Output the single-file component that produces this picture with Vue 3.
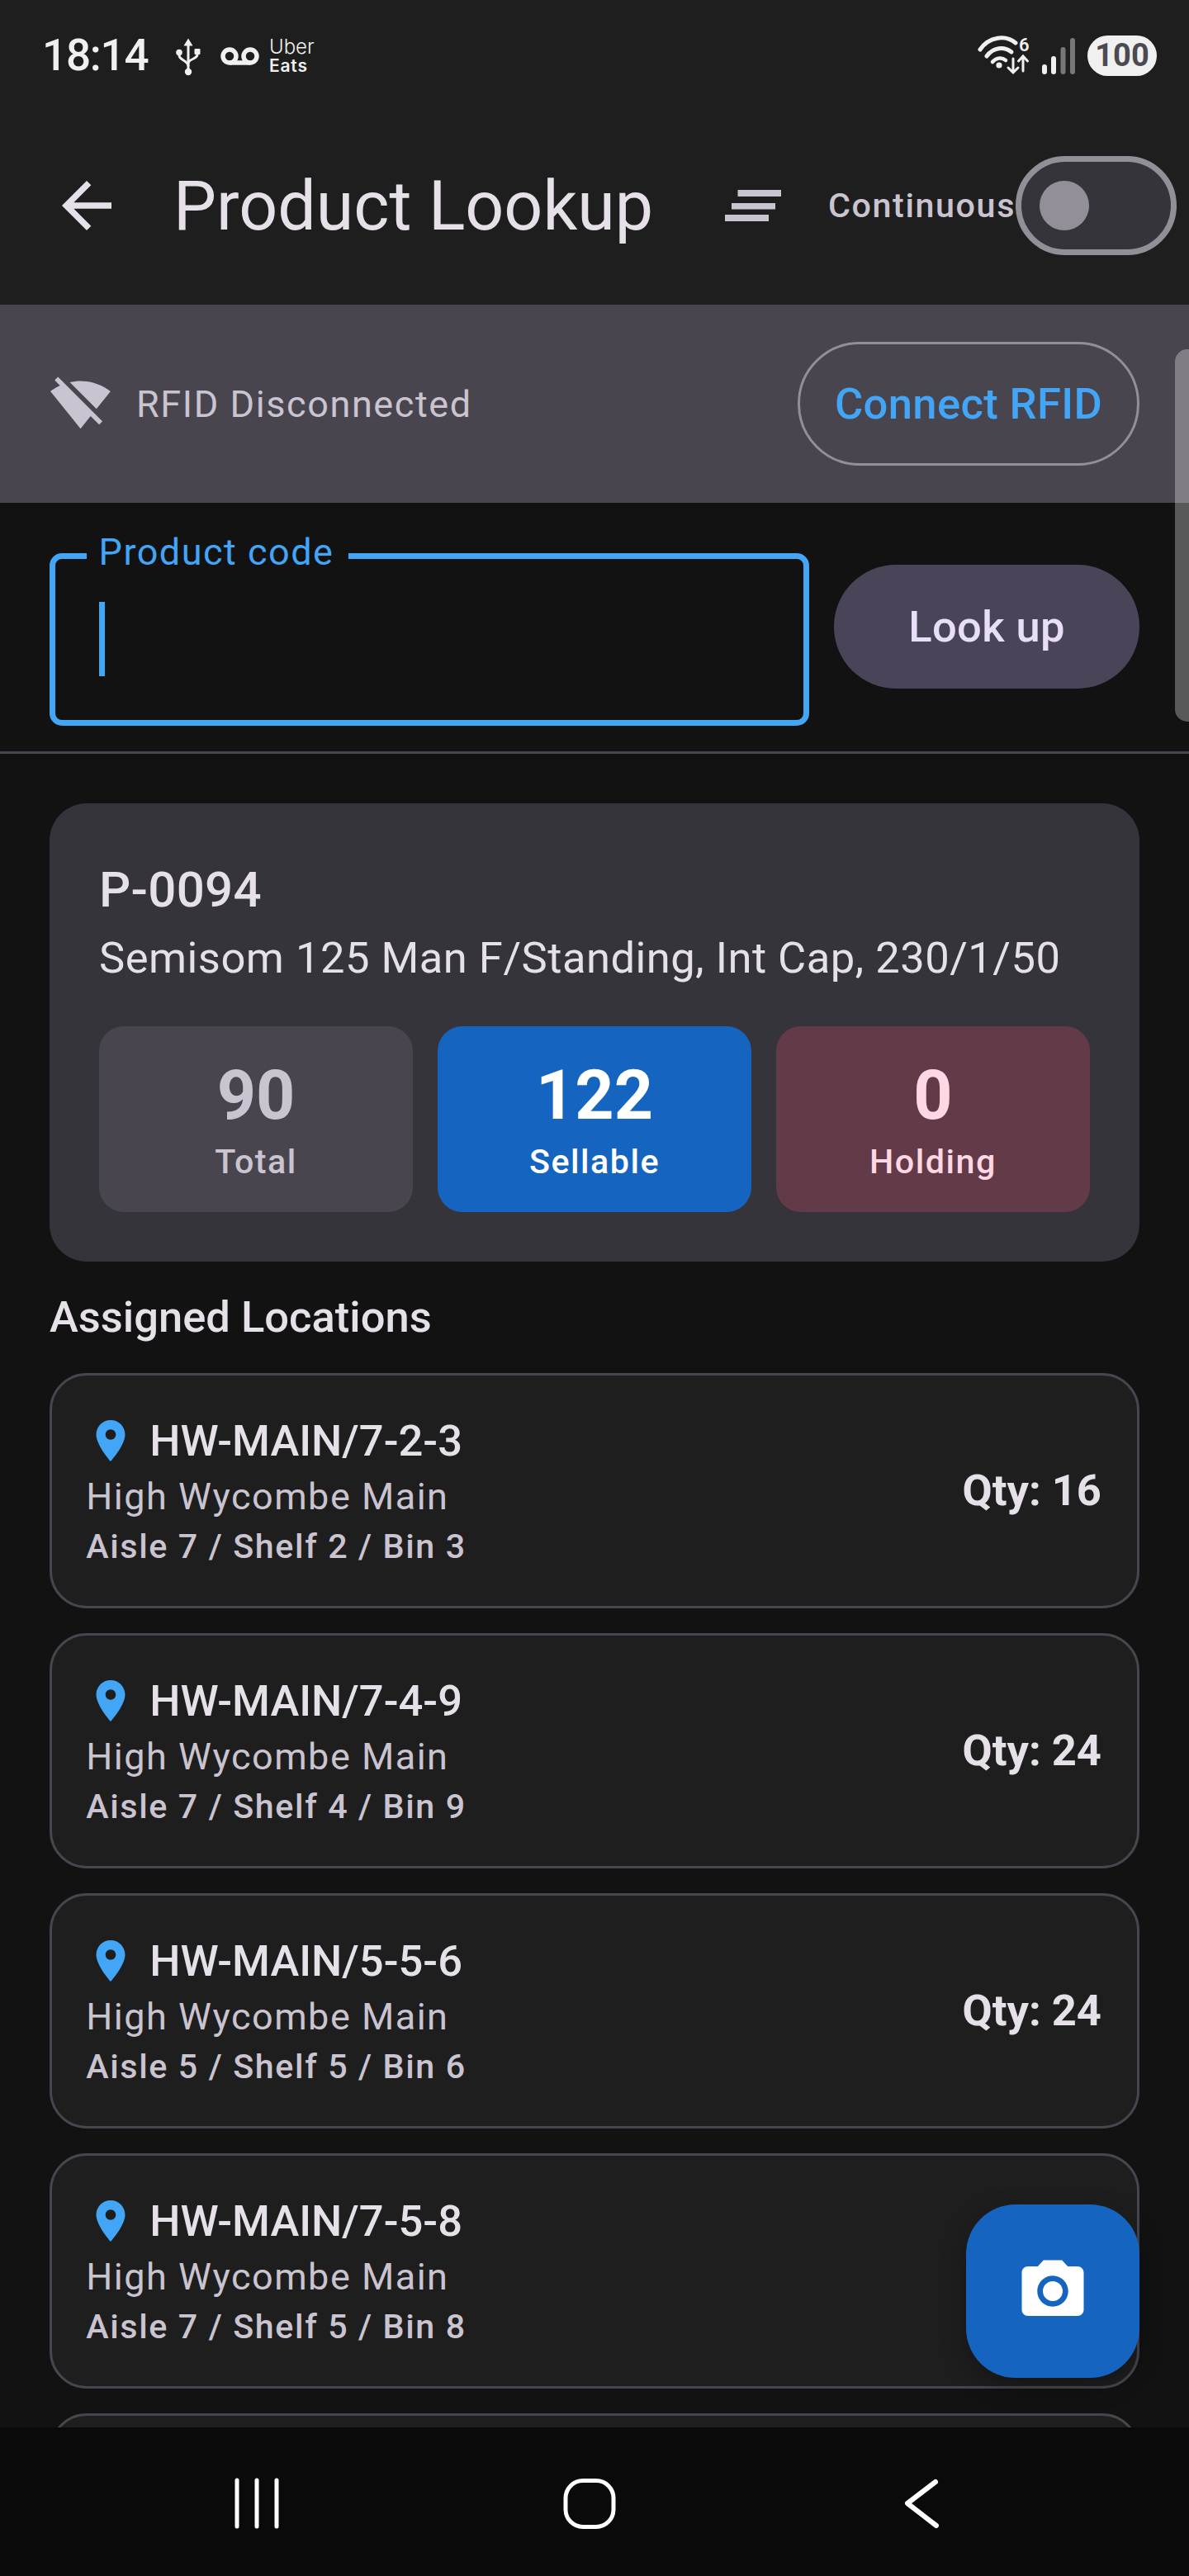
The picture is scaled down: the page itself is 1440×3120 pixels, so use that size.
<template>
  <div class="screen">
    <header class="app-header">
      <div class="status-bar">
        <span class="clock">18:14</span>
        <svg class="usb" width="34" height="46" viewBox="0 0 34 46" fill="none" stroke="#f0f0f0" stroke-width="3">
          <path d="M17 6V40" />
          <path d="M17 0.5L11.5 9.5H22.5Z" fill="#f0f0f0" stroke="none" />
          <circle cx="17" cy="41" r="4.2" fill="#f0f0f0" stroke="none" />
          <circle cx="6" cy="17.5" r="3.8" fill="#f0f0f0" stroke="none" />
          <rect x="24.5" y="13" width="7" height="7" rx="1" fill="#f0f0f0" stroke="none" />
          <path d="M6 18V21C6 27 17 27 17 34" />
          <path d="M28 18V20C28 26 17 25 17 31" />
        </svg>
        <svg class="voicemail" width="47" height="22" viewBox="0 0 47 22" fill="none" stroke="#f0f0f0" stroke-width="5.5">
          <circle cx="11" cy="11" r="8" />
          <circle cx="36" cy="11" r="8" />
          <path d="M11 19H36" />
        </svg>
        <div class="uber">
          <span class="uber-top">Uber</span>
          <span class="uber-bottom">Eats</span>
        </div>
        <div class="status-right">
          <svg width="66" height="48" viewBox="0 0 66 48" fill="none" stroke="#f0f0f0" stroke-linecap="round">
            <path d="M3 17C14 1 34 -1 46 9" stroke-width="5" />
            <path d="M11 25C19 14 32 13 41 20" stroke-width="5" />
            <path d="M18 32C22 27 29 26 34 30" stroke-width="4.5" />
            <circle cx="26" cy="36" r="3.6" fill="#f0f0f0" stroke="none" />
            <path d="M43 28V44M37 39L43 45L49 39" stroke-width="3" />
            <path d="M55 43V26M49.5 31L55 25L60.5 31" stroke-width="3" />
            <text x="50" y="19" class="wifi-six">6</text>
          </svg>
          <svg class="signal" width="40" height="44" viewBox="0 0 40 44">
            <rect x="0" y="32" width="6" height="12" rx="3" fill="#f0f0f0" />
            <rect x="11" y="22" width="6" height="22" rx="3" fill="#f0f0f0" />
            <rect x="22.5" y="11" width="6" height="33" rx="3" fill="#777" />
            <rect x="34" y="0" width="6" height="44" rx="3" fill="#777" />
          </svg>
          <span class="battery">100</span>
        </div>
      </div>

      <div class="toolbar">
        <svg class="back-arrow" width="90" height="90" viewBox="0 0 24 24" fill="#e6e0e9">
          <path d="M20 11H7.83l5.59-5.59L12 4l-8 8 8 8 1.41-1.41L7.83 13H20v-2z" />
        </svg>
        <h1 class="title">Product Lookup</h1>
        <svg class="sort-icon" width="90" height="90" viewBox="0 0 90 90" fill="#cac4d0">
          <rect x="26.5" y="26" width="52.5" height="8" />
          <rect x="19" y="42" width="53" height="7.5" />
          <rect x="11" y="56" width="53" height="8" />
        </svg>
        <span class="continuous">Continuous</span>
        <div class="switch">
          <div class="switch-thumb"></div>
        </div>
      </div>
    </header>

    <section class="rfid-banner">
      <svg width="75" height="75" viewBox="0 0 24 24" fill="#cac4d0">
        <path d="M23.64 7c-.45-.34-4.93-4-11.64-4-1.5 0-2.89.19-4.15.48L18.18 13.8 23.64 7zm-6.6 8.22L3.27 1.44 2 2.72l2.05 2.06C1.91 5.76.59 6.82.36 7l11.63 14.49.01.01.01-.01 3.9-4.86 3.32 3.32 1.27-1.27-3.46-3.46z" />
      </svg>
      <span class="rfid-text">RFID Disconnected</span>
      <button class="connect-button">Connect RFID</button>
    </section>

    <section class="search-row">
      <div class="field-wrap">
        <div class="field">
          <span class="field-label">Product code</span>
          <div class="caret"></div>
        </div>
      </div>
      <button class="lookup-button">Look up</button>
    </section>

    <main class="content">
      <div class="product-card">
        <div class="product-code">P-0094</div>
        <div class="product-name">Semisom 125 Man F/Standing, Int Cap, 230/1/50</div>
        <div class="stats">
          <div v-for="stat in stats" :key="stat.label" class="stat" :class="stat.kind">
            <div class="stat-value">{{ stat.value }}</div>
            <div class="stat-label">{{ stat.label }}</div>
          </div>
        </div>
      </div>

      <h2 class="section-title">Assigned Locations</h2>

      <div class="locations">
        <div v-for="loc in locations" :key="loc.code" class="location-card">
          <div class="location-info">
            <div class="location-code">
              <svg width="60" height="60" viewBox="0 0 24 24" fill="#42a5f5">
                <path d="M12 2C8.13 2 5 5.13 5 9c0 5.25 7 13 7 13s7-7.75 7-13c0-3.87-3.13-7-7-7zm0 9.5c-1.38 0-2.5-1.12-2.5-2.5s1.12-2.5 2.5-2.5 2.5 1.12 2.5 2.5-1.12 2.5-2.5 2.5z" />
              </svg>
              <span>{{ loc.code }}</span>
            </div>
            <div class="location-site">High Wycombe Main</div>
            <div class="location-path">{{ loc.path }}</div>
          </div>
          <div v-if="loc.qty" class="location-qty">Qty: {{ loc.qty }}</div>
        </div>
        <!-- next card is cut off by the nav bar, only its top edge shows -->
        <div class="location-card"></div>
      </div>
    </main>

    <nav class="nav-bar">
      <svg width="70" height="70" viewBox="0 0 70 70" fill="none" stroke="#fff" stroke-width="5" stroke-linecap="round">
        <path d="M11 7V63M35 7V63M59 7V63" />
      </svg>
      <svg width="70" height="70" viewBox="0 0 70 70" fill="none" stroke="#fff" stroke-width="5">
        <rect x="6" y="7.5" width="58" height="56" rx="21" />
      </svg>
      <svg width="70" height="70" viewBox="0 0 70 70" fill="none" stroke="#fff" stroke-width="6" stroke-linecap="round" stroke-linejoin="round">
        <path d="M52 9L18 35L53 62" />
      </svg>
    </nav>

    <div class="scrollbar"></div>

    <button class="fab">
      <svg width="90" height="90" viewBox="0 0 24 24" fill="#fff">
        <path d="M12 15.2a3.2 3.2 0 1 0 0-6.4 3.2 3.2 0 0 0 0 6.4z" />
        <path d="M9 2L7.17 4H4c-1.1 0-2 .9-2 2v12c0 1.1.9 2 2 2h16c1.1 0 2-.9 2-2V6c0-1.1-.9-2-2-2h-3.17L15 2H9zm3 15c-2.76 0-5-2.24-5-5s2.24-5 5-5 5 2.24 5 5-2.24 5-5 5z" />
      </svg>
    </button>
  </div>
</template>

<script setup>
const stats = [
  { label: 'Total', value: 90, kind: 'stat-total' },
  { label: 'Sellable', value: 122, kind: 'stat-sellable' },
  { label: 'Holding', value: 0, kind: 'stat-holding' }
]

const locations = [
  { code: 'HW-MAIN/7-2-3', path: 'Aisle 7 / Shelf 2 / Bin 3', qty: 16 },
  { code: 'HW-MAIN/7-4-9', path: 'Aisle 7 / Shelf 4 / Bin 9', qty: 24 },
  { code: 'HW-MAIN/5-5-6', path: 'Aisle 5 / Shelf 5 / Bin 6', qty: 24 },
  { code: 'HW-MAIN/7-5-8', path: 'Aisle 7 / Shelf 5 / Bin 8' }
]
</script>

<style scoped>
.screen {
  position: relative;
  width: 1440px;
  height: 3120px;
  overflow: hidden;
  display: flex;
  flex-direction: column;
  background: #121212;
  color: #e6e0e9;
  font-family: Roboto, "Liberation Sans", sans-serif;
}

.app-header {
  background: #1e1e1e;
  height: 369px;
  flex-shrink: 0;
}

.status-bar {
  height: 129px;
  box-sizing: border-box;
  padding: 43px 39px 0 51px;
  display: flex;
  align-items: flex-start;
}

.clock {
  font-size: 53px;
  font-weight: 500;
  line-height: 49px;
  letter-spacing: -1.2px;
  color: #f0f0f0;
  width: 160px;
}

.usb {
  margin-top: 3px;
}

.voicemail {
  margin: 14px 0 0 22px;
}

.uber {
  margin: 1px 0 0 12px;
  display: flex;
  flex-direction: column;
  color: #f0f0f0;
  font-family: Inter, sans-serif;
}

.uber-top {
  font-size: 24px;
  font-weight: 300;
  line-height: 26px;
}

.uber-bottom {
  font-size: 21px;
  font-weight: 600;
  line-height: 20px;
  letter-spacing: 0.8px;
}

.status-right {
  margin-left: auto;
  display: flex;
  align-items: flex-start;
}

.wifi-six {
  font-size: 22px;
  font-weight: 600;
  fill: #f0f0f0;
  stroke: none;
}

.signal {
  margin: 3px 0 0 12px;
}

.battery {
  margin-left: 15px;
  width: 84px;
  height: 49px;
  border-radius: 25px;
  background: #f0f0f0;
  color: #4a4a50;
  font-size: 38px;
  font-weight: 700;
  line-height: 49px;
  text-align: center;
}

.toolbar {
  height: 240px;
  display: flex;
  align-items: center;
  padding: 0 15px 0 60px;
}

.title {
  flex: 1;
  margin: 0 0 0 60px;
  font-size: 82.5px;
  font-weight: 400;
  line-height: 105px;
  color: #e6e0e9;
}

.continuous {
  margin-left: 46px;
  font-size: 41.25px;
  font-weight: 500;
  letter-spacing: 1.6px;
  color: #cac4d0;
}

.switch {
  width: 195px;
  height: 120px;
  box-sizing: border-box;
  border: 7.5px solid #938f99;
  border-radius: 60px;
  background: #36343b;
  display: flex;
  align-items: center;
  padding-left: 22px;
}

.switch-thumb {
  width: 60px;
  height: 60px;
  border-radius: 50%;
  background: #938f99;
}

.rfid-banner {
  height: 240px;
  box-sizing: border-box;
  background: #49454f;
  display: flex;
  align-items: center;
  padding: 0 60px;
  flex-shrink: 0;
}

.rfid-text {
  margin-left: 30px;
  font-size: 45px;
  letter-spacing: 1.6px;
  color: #cac4d0;
}

.connect-button {
  margin-left: auto;
  height: 150px;
  width: 414px;
  border: 3.75px solid #938f99;
  border-radius: 75px;
  background: transparent;
  color: #42a5f5;
  font-family: inherit;
  font-size: 52.5px;
  font-weight: 500;
  letter-spacing: 0.375px;
}

.search-row {
  display: flex;
  align-items: center;
  gap: 30px;
  padding: 30px 60px;
  height: 303.75px;
  box-sizing: border-box;
  border-bottom: 3.75px solid #49454f;
  flex-shrink: 0;
}

.field-wrap {
  flex: 1;
  padding-top: 30px;
}

.field {
  position: relative;
  height: 209px;
  box-sizing: border-box;
  border: 7.5px solid #42a5f5;
  border-radius: 15px;
  display: flex;
  align-items: center;
  padding-left: 52.5px;
}

.field-label {
  position: absolute;
  left: 37.5px;
  top: -31px;
  padding: 0 18px 0 15px;
  background: #121212;
  color: #42a5f5;
  font-size: 45px;
  line-height: 45px;
  letter-spacing: 1.5px;
}

.caret {
  width: 7.5px;
  height: 90px;
  background: #42a5f5;
}

.lookup-button {
  width: 370px;
  height: 150px;
  border: none;
  border-radius: 75px;
  background: #4a4458;
  color: #e8def8;
  font-family: inherit;
  font-size: 52.5px;
  font-weight: 500;
  letter-spacing: 0.375px;
}

.content {
  flex: 1;
  min-height: 0;
  overflow: hidden;
  padding: 60px 60px 0;
}

.product-card {
  background: #36343b;
  border-radius: 45px;
  padding: 60px;
}

.product-code {
  font-size: 60px;
  font-weight: 500;
  line-height: 90px;
  letter-spacing: 0.3px;
  color: #e6e0e9;
}

.product-name {
  font-size: 52.5px;
  line-height: 75px;
  letter-spacing: 0.5px;
  color: #e6e0e9;
  white-space: nowrap;
}

.stats {
  display: flex;
  gap: 30px;
  margin-top: 45px;
}

.stat {
  flex: 1;
  height: 225px;
  border-radius: 30px;
  display: flex;
  flex-direction: column;
  align-items: center;
  justify-content: center;
}

.stat-total {
  background: #49454f;
  color: #cac4d0;
}

.stat-sellable {
  background: #1565c0;
  color: #fff;
}

.stat-holding {
  background: #633b48;
  color: #ffd8e4;
}

.stat-value {
  font-size: 82.5px;
  font-weight: 700;
  line-height: 103px;
}

.stat-label {
  font-size: 41.25px;
  font-weight: 500;
  line-height: 58px;
  letter-spacing: 1.5px;
}

.section-title {
  margin: 30px 0;
  font-size: 52.5px;
  font-weight: 500;
  line-height: 75px;
  color: #e6e0e9;
}

.locations {
  display: flex;
  flex-direction: column;
  gap: 30px;
}

.location-card {
  flex-shrink: 0;
  height: 285px;
  box-sizing: border-box;
  background: #1e1e1e;
  border: 3.75px solid #49454f;
  border-radius: 45px;
  padding: 0 43px 0 41.25px;
  display: flex;
  align-items: center;
  justify-content: space-between;
}

.location-code {
  display: flex;
  align-items: center;
  gap: 17px;
  font-size: 52.5px;
  font-weight: 500;
  line-height: 75px;
  color: #e6e0e9;
}

.location-site {
  font-size: 45px;
  line-height: 60px;
  letter-spacing: 1.5px;
  color: #cac4d0;
}

.location-path {
  font-size: 41.25px;
  font-weight: 500;
  line-height: 60px;
  letter-spacing: 1.6px;
  color: #cac4d0;
}

.location-qty {
  font-size: 52.5px;
  font-weight: 700;
  color: #e6e0e9;
}

.nav-bar {
  position: relative;
  height: 180px;
  flex-shrink: 0;
  box-sizing: border-box;
  padding: 4px 13px 0 0;
  background: #0a0a0a;
  display: flex;
  align-items: center;
  justify-content: center;
  gap: 332.5px;
}

.scrollbar {
  position: absolute;
  right: 0;
  top: 423px;
  width: 17px;
  height: 451px;
  border-radius: 15px 0 0 15px;
  background: rgba(255, 255, 255, 0.3);
}

.fab {
  position: absolute;
  right: 60px;
  bottom: 240px;
  width: 210px;
  height: 210px;
  border: none;
  border-radius: 60px;
  background: #1565c0;
  box-shadow: 0 10px 30px rgba(0, 0, 0, 0.3);
  display: flex;
  align-items: center;
  justify-content: center;
  padding: 0;
}
</style>

<style>
html,
body {
  margin: 0;
  background: #121212;
}
</style>
